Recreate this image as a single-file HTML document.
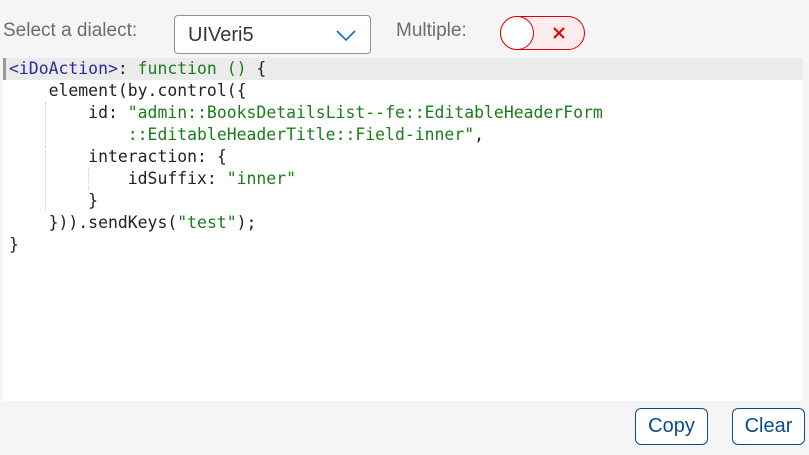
<!DOCTYPE html>
<html><head><style>
body{margin:0;width:809px;height:455px;background:#f5f5f5;font-family:"Liberation Sans",sans-serif;position:relative;overflow:hidden}
.lbl{position:absolute;font-size:19px;color:#6a6d70}
.sel{position:absolute;left:174px;top:15px;width:197px;height:39px;border:1px solid #89919a;border-radius:4px;background:#fff;box-sizing:border-box}
.sel span{position:absolute;left:13px;top:8px;font-size:20px;color:#32363a}
.tog{position:absolute;left:500px;top:16px;width:85px;height:34px;border:1px solid #d00;border-radius:17px;background:#ffebeb;box-sizing:border-box}
.knob{position:absolute;left:-1px;top:-1px;width:34px;height:34px;border:1px solid #d00;border-radius:50%;background:#fff;box-sizing:border-box}
.ed{position:absolute;left:3px;top:58px;width:800px;height:343px;background:#fff}
.act{position:absolute;left:3px;top:58px;width:800px;height:22px;background:#ebebeb;border-left:3px solid #999;box-sizing:border-box}
pre{position:absolute;left:9px;top:58px;margin:0;font-family:"DejaVu Sans Mono","Liberation Mono",monospace;font-size:16.45px;line-height:22px;color:#222}
.g{color:#1a7d1a}.b{color:#2a2aa0}
.guide{position:absolute;border-left:1px dotted #ccc;width:0}
.btn{position:absolute;top:408px;height:37px;border:1px solid #0a4b8c;border-radius:6px;background:#fff;color:#0a4b8c;font-size:20px;box-sizing:border-box;text-align:center;line-height:35px}
</style></head><body>
<div class="lbl" style="left:3px;top:20px">Select a dialect:</div>
<div class="sel"><span>UIVeri5</span>
<svg style="position:absolute;left:161px;top:14px" width="20" height="12" viewBox="0 0 20 12"><path d="M1 1 L10 10 L19 1" fill="none" stroke="#0a6ed1" stroke-width="1.6"/></svg></div>
<div class="lbl" style="left:396px;top:20px">Multiple:</div>
<div class="tog"><div class="knob"></div>
<svg style="position:absolute;left:52px;top:10px" width="12" height="12" viewBox="0 0 12 12"><path d="M1 1L11 11M11 1L1 11" stroke="#d00" stroke-width="2"/></svg></div>
<div class="ed"></div>
<div class="act"></div>
<div class="guide" style="left:45px;top:102px;height:44px"></div>
<div class="guide" style="left:45px;top:146px;height:66px"></div>
<div class="guide" style="left:88px;top:168px;height:22px"></div>
<pre><span class="b">&lt;iDoAction&gt;</span>: <span class="g">function () </span>{
    element(by.control({
        id: <span class="g">"admin::BooksDetailsList--fe::EditableHeaderForm</span>
<span class="g">            ::EditableHeaderTitle::Field-inner"</span>,
        interaction: {
            idSuffix: <span class="g">"inner"</span>
        }
    })).sendKeys(<span class="g">"test"</span>);
}</pre>
<div class="btn" style="left:635px;width:73px">Copy</div>
<div class="btn" style="left:732px;width:73px">Clear</div>
</body></html>
